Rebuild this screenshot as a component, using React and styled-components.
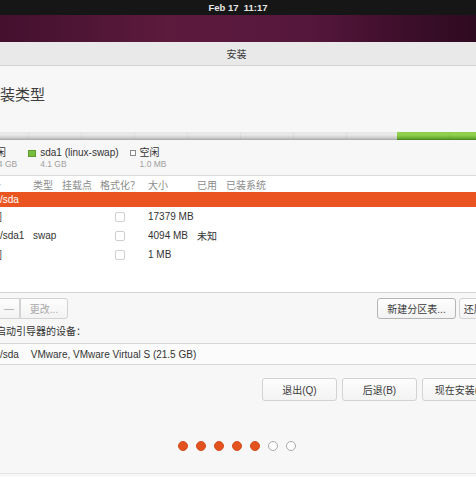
import React from 'react';
import styled, { createGlobalStyle } from 'styled-components';

const GlobalStyle = createGlobalStyle`
  html, body {
    margin: 0;
    padding: 0;
    background: #f7f7f7;
    overflow: hidden;
  }
  body {
    font-family: 'Liberation Sans', 'Noto Sans CJK SC', sans-serif;
    font-size: 10px;
    color: #333;
  }
`;

const Screen = styled.div`
  width: 476px;
  height: 477px;
  overflow: hidden;
  background: #f7f7f7;
`;

const TopBar = styled.div`
  height: 15px;
  background: #161616;
  color: #e6e6e6;
  font-size: 9.5px;
  font-weight: bold;
  display: flex;
  align-items: center;
  justify-content: center;
  white-space: pre;
`;

const Desktop = styled.div`
  height: 27px;
  background: linear-gradient(90deg, #43102e 0%, #5c1a3d 35%, #56173d 65%, #3d0e2a 85%, #2e0b21 100%);
`;

const Window = styled.div`
  margin-left: -44px;
  width: 561px;
  background: #f7f7f7;
  border-bottom: 1px solid #e4e4e4;
`;

const TitleBar = styled.div`
  height: 23px;
  background: #e9e9e9;
  border-bottom: 1px solid #d2d2d2;
  display: flex;
  align-items: center;
  justify-content: center;
  font-size: 10px;
  color: #3a3a3a;
`;

const Body = styled.div`
  padding: 19px 20px 0 20px;
  display: flex;
  flex-direction: column;
`;

const Heading = styled.h1`
  margin: 0;
  padding-left: 9px;
  font-size: 15px;
  line-height: 20px;
  font-weight: normal;
  color: #3c3c3c;
`;

const Bar = styled.div`
  margin-top: 27px;
  height: 8px;
  display: flex;
  border-radius: 2px;
  overflow: hidden;
`;

const Segment = styled.div`
  flex: ${p => p.$grow} 0 0;
  background:
    repeating-linear-gradient(90deg, transparent 0 52px, rgba(0,0,0,0.04) 52px 53px),
    linear-gradient(180deg, ${p => p.$top} 0%, ${p => p.$top} 45%, ${p => p.$bottom} 100%);
  border-bottom: 1px solid ${p => p.$edge};
`;

const Legend = styled.div`
  margin-top: 7px;
  display: flex;
  gap: 11px;
`;

const LegendItem = styled.div`
  display: grid;
  grid-template-columns: auto auto;
  column-gap: 4px;
  align-items: center;
`;

const Swatch = styled.span`
  width: ${p => (p.$color ? 8 : 6)}px;
  height: ${p => (p.$color ? 7 : 6)}px;
  background: ${p => p.$color || '#fff'};
  border: 1px solid ${p => (p.$color ? '#5f9a2e' : '#8a8a8a')};
  box-sizing: border-box;
  display: block;
`;

const LegendLabel = styled.span`
  line-height: 12px;
  font-size: 10px;
  color: #333;
`;

const LegendSize = styled.span`
  grid-column: 2;
  line-height: 11px;
  font-size: 8.5px;
  color: #a0a0a0;
`;

const TableBox = styled.div`
  margin-top: 5px;
  height: 116px;
  background: #fff;
  border-top: 1px solid #dcdcdc;
  border-bottom: 1px solid #d4d4d4;
`;

const COLS = '57px 29px 38px 48px 49px 29px 1fr';

const HeadRow = styled.div`
  display: grid;
  grid-template-columns: ${COLS};
  height: 16px;
  align-items: center;
  color: #8c8c8c;
  font-size: 10px;
`;

const Row = styled.div`
  display: grid;
  grid-template-columns: ${COLS};
  height: ${p => (p.$selected ? 15 : 19)}px;
  align-items: center;
  background: ${p => (p.$selected ? '#e95420' : 'transparent')};
  color: ${p => (p.$selected ? '#fff' : '#333')};
  font-size: 10px;
  white-space: nowrap;
`;

const Cell = styled.span`
  padding-left: ${p => p.$pad || 0}px;
`;

const Check = styled.span`
  display: block;
  margin-left: 15px;
  width: 10px;
  height: 10px;
  box-sizing: border-box;
  border: 1px solid #cfcfcf;
  border-radius: 2px;
  background: #fff;
`;

const Toolbar = styled.div`
  margin-top: 5px;
  display: flex;
  justify-content: space-between;
`;

const Group = styled.div`
  display: flex;
  gap: ${p => p.$gap || 0}px;
`;

const Button = styled.button`
  font-family: inherit;
  font-size: 10px;
  width: ${p => p.$w}px;
  height: ${p => p.$h || 21}px;
  padding: 0;
  color: ${p => (p.$disabled ? '#a8a8a8' : '#3a3a3a')};
  background: linear-gradient(180deg, #fdfdfd, #f3f3f3);
  border: 1px solid ${p => (p.$focus ? '#b4b4b4' : '#d2d2d2')};
  border-radius: ${p => p.$radius || '3px'};
  box-sizing: border-box;
`;

const FieldLabel = styled.div`
  margin-top: 7px;
  line-height: 12px;
  font-size: 10px;
  color: #333;
`;

const Select = styled.div`
  margin-top: 5px;
  height: 22px;
  box-sizing: border-box;
  background: #fbfbfb;
  border: 1px solid #d6d6d6;
  border-radius: 3px;
  display: flex;
  align-items: center;
  padding-left: 4px;
  gap: 12px;
  font-size: 10px;
  color: #333;
  white-space: nowrap;
`;

const Actions = styled.div`
  margin-top: 13px;
  display: flex;
  justify-content: flex-end;
  gap: 5px;
`;

const Dots = styled.div`
  margin-top: 40px;
  margin-bottom: 22px;
  display: flex;
  justify-content: center;
  gap: 8px;
`;

const Dot = styled.span`
  width: 10px;
  height: 10px;
  border-radius: 50%;
  box-sizing: border-box;
  background: ${p => (p.$on ? '#e3531f' : '#fff')};
  border: 1px solid ${p => (p.$on ? '#d54d1c' : '#a9a9a9')};
`;

const rows = [
  { dev: '空闲', type: '', size: '17379 MB', used: '' },
  { dev: '/dev/sda1', type: 'swap', size: '4094 MB', used: '未知' },
  { dev: '空闲', type: '', size: '1 MB', used: '' },
];

export default function App() {
  return (
    <Screen>
      <GlobalStyle />
      <TopBar>Feb 17  11:17</TopBar>
      <Desktop />
      <Window>
        <TitleBar>安装</TitleBar>
        <Body>
          <Heading>安装类型</Heading>

          <Bar>
            <Segment $grow={423} $top="#e8e8e8" $bottom="#bdbdbd" $edge="#adadad" />
            <Segment $grow={101} $top="#8fd04c" $bottom="#5e9f2c" $edge="#4f8a24" />
          </Bar>

          <Legend>
            <LegendItem>
              <Swatch />
              <LegendLabel>空闲</LegendLabel>
              <LegendSize>17.4 GB</LegendSize>
            </LegendItem>
            <LegendItem>
              <Swatch $color="#79bf3f" />
              <LegendLabel>sda1 (linux-swap)</LegendLabel>
              <LegendSize>4.1 GB</LegendSize>
            </LegendItem>
            <LegendItem>
              <Swatch />
              <LegendLabel>空闲</LegendLabel>
              <LegendSize>1.0 MB</LegendSize>
            </LegendItem>
          </Legend>

          <TableBox>
            <HeadRow>
              <Cell $pad={5}>设备</Cell>
              <Cell>类型</Cell>
              <Cell>挂载点</Cell>
              <Cell>格式化？</Cell>
              <Cell>大小</Cell>
              <Cell>已用</Cell>
              <Cell>已装系统</Cell>
            </HeadRow>
            <Row $selected>
              <Cell $pad={5}>/dev/sda</Cell>
            </Row>
            {rows.map((r, i) => (
              <Row key={i}>
                <Cell $pad={r.dev === '空闲' ? 6 : 5}>{r.dev}</Cell>
                <Cell>{r.type}</Cell>
                <Cell />
                <Check />
                <Cell>{r.size}</Cell>
                <Cell>{r.used}</Cell>
                <Cell />
              </Row>
            ))}
          </TableBox>

          <Toolbar>
            <Group>
              <Button $w={22} $radius="3px 0 0 3px">+</Button>
              <Button $w={22} $radius="0" $disabled>—</Button>
              <Button $w={48} $radius="0 3px 3px 0" $disabled>更改...</Button>
            </Group>
            <Group $gap={3}>
              <Button $w={79} $focus>新建分区表...</Button>
              <Button $w={38}>还原...</Button>
            </Group>
          </Toolbar>

          <FieldLabel>安装启动引导器的设备：</FieldLabel>
          <Select>
            <span>/dev/sda</span>
            <span>VMware, VMware Virtual S (21.5 GB)</span>
          </Select>

          <Actions>
            <Button $w={75} $h={23}>退出(Q)</Button>
            <Button $w={75} $h={23}>后退(B)</Button>
            <Button $w={75} $h={23}>现在安装(I)</Button>
          </Actions>
        </Body>
        <Dots>
          {[1, 1, 1, 1, 1, 0, 0].map((on, i) => (
            <Dot key={i} $on={!!on} />
          ))}
        </Dots>
      </Window>
    </Screen>
  );
}
